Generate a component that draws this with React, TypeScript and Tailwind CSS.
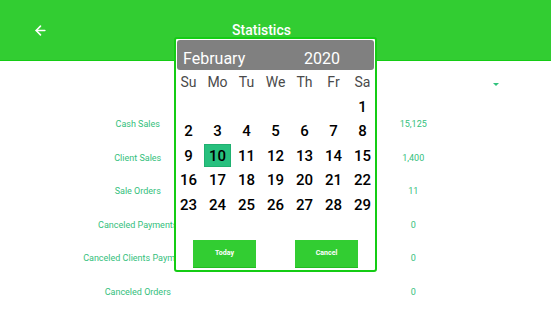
import React from 'react';
import { ArrowLeft } from 'lucide-react';

const stats = [
    { label: 'Cash Sales', value: '15,125' },
    { label: 'Client Sales', value: '1,400' },
    { label: 'Sale Orders', value: '11' },
    { label: 'Canceled Payments', value: '0' },
    { label: 'Canceled Clients Payments', value: '0' },
    { label: 'Canceled Orders', value: '0' },
];

const weekDays = ['Su', 'Mo', 'Tu', 'We', 'Th', 'Fr', 'Sa'];

// February 2020 starts on a Saturday
const days: (number | null)[] = [
    null, null, null, null, null, null,
    ...Array.from({ length: 29 }, (_, i) => i + 1),
];

function DatePicker() {
    return (
        <div className="absolute left-[174px] top-[37px] w-[203px] h-[235px] bg-white border-2 border-[#14cc14] rounded-[3px] flex flex-col">
            {/* Month / year bar */}
            <div className="mx-[1px] mt-[1px] h-[30px] bg-[#808080] rounded-[3px] flex items-end pb-[3px] pl-[6px] text-white text-[16px] leading-none">
                <span className="w-[121px]">February</span>
                <span>2020</span>
            </div>

            {/* Calendar grid */}
            <div className="-ml-[2px] grid grid-cols-[repeat(7,29px)]">
                {weekDays.map((d) => (
                    <div key={d} className="h-[24.5px] flex items-center justify-center text-[14px] text-[#4a4a4a]">
                        {d}
                    </div>
                ))}
                {days.map((d, i) => (
                    <div key={i} className="h-[24.5px] flex items-center justify-center">
                        {d !== null && (
                            <span
                                className={
                                    d === 10
                                        ? 'w-[27px] h-[23px] flex items-center justify-center bg-[#27c07e] border border-[#1fb070] text-[15px] font-medium text-black'
                                        : 'text-[15px] font-medium text-black'
                                }
                            >
                                {d}
                            </span>
                        )}
                    </div>
                ))}
            </div>

            {/* Buttons */}
            <div className="mt-auto mb-[2px] px-[17px] flex justify-between">
                {['Today', 'Cancel'].map((b) => (
                    <button
                        key={b}
                        className="w-[63px] h-[28px] bg-[#32cd32] border-b border-[#22bb22] text-white text-[7px] font-bold"
                    >
                        {b}
                    </button>
                ))}
            </div>
        </div>
    );
}

export default function App() {
    return (
        <div className="relative w-[551px] h-[310px] overflow-hidden bg-white font-['Roboto',sans-serif]">
            {/* Header */}
            <div className="h-[61px] bg-[#32cd32] border-b border-[#14cc14] grid grid-cols-[80px_1fr_108px] items-center">
                <div className="pl-[33px]">
                    <ArrowLeft size={15} strokeWidth={2.5} className="text-white" />
                </div>
                <h1 className="text-center text-white text-[14px] font-medium">Statistics</h1>
                <div />
            </div>

            {/* Filter row */}
            <div className="h-[47px] flex justify-end items-center pr-[52px]">
                <span className="w-0 h-0 border-l-[3px] border-r-[3px] border-t-[3px] border-l-transparent border-r-transparent border-t-[#2fc27c]" />
            </div>

            {/* Stats list */}
            <div className="grid grid-cols-2">
                {stats.map((s) => (
                    <React.Fragment key={s.label}>
                        <div className="h-[33.5px] flex items-center justify-center text-[9px] text-[#34c07c] whitespace-nowrap">
                            {s.label}
                        </div>
                        <div className="h-[33.5px] flex items-center justify-center text-[9px] text-[#34c07c]">
                            {s.value}
                        </div>
                    </React.Fragment>
                ))}
            </div>

            <DatePicker />
        </div>
    );
}
